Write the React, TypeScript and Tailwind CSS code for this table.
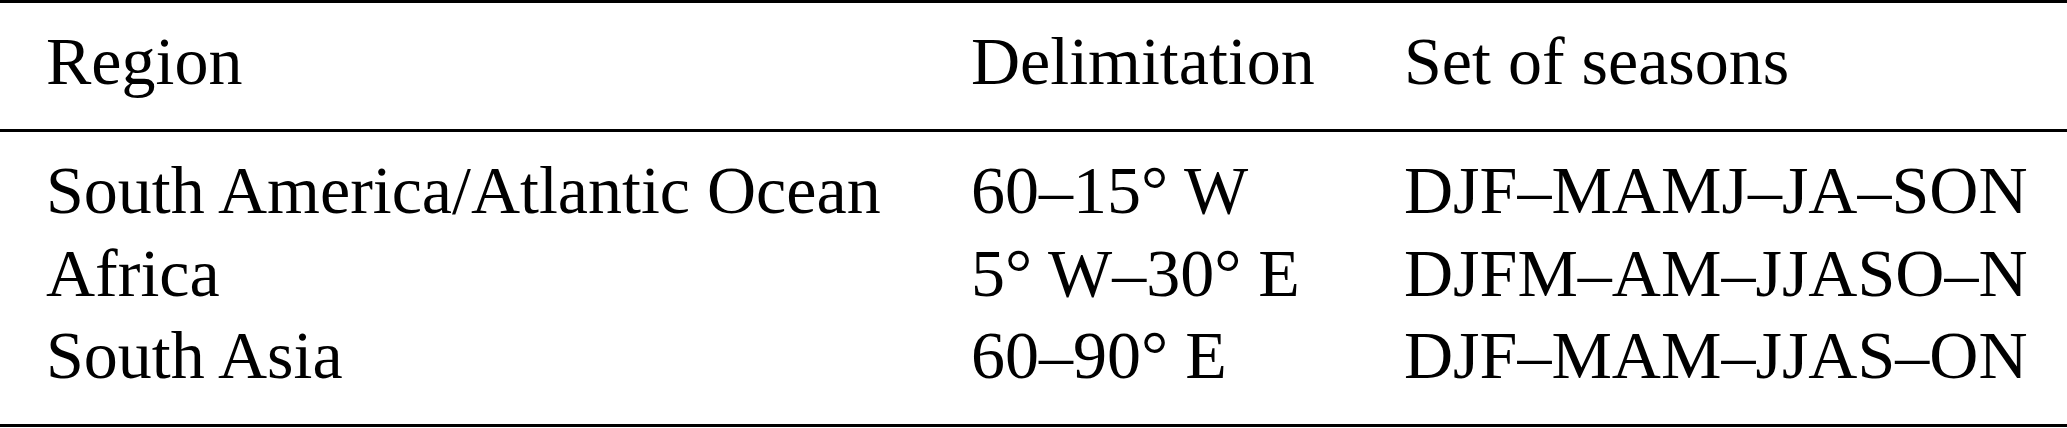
const rows = [
  { region: "South America/Atlantic Ocean", delim: "60–15° W", seasons: "DJF–MAMJ–JA–SON" },
  { region: "Africa", delim: "5° W–30° E", seasons: "DJFM–AM–JJASO–N" },
  { region: "South Asia", delim: "60–90° E", seasons: "DJF–MAM–JJAS–ON" },
]

const App = () => {
  return (
    <div className="w-[2067px] h-[428px] bg-white text-black font-['Liberation_Serif','Times_New_Roman',serif] text-[68px] leading-[82.5px]">
      {/* top rule */}
      <div className="h-[3px] bg-black" />
      <div className="grid grid-cols-[925px_433px_1fr] pl-[46px] pt-[17px] pb-[26.5px]">
        <div>Region</div>
        <div>Delimitation</div>
        <div>Set of seasons</div>
      </div>
      {/* mid rule */}
      <div className="h-[3px] bg-black" />
      <div className="grid grid-cols-[925px_433px_1fr] pl-[46px] pt-[17px] pb-[27px]">
        {rows.map((r) => (
          <div key={r.region} className="contents">
            <div>{r.region}</div>
            <div>{r.delim}</div>
            <div>{r.seasons}</div>
          </div>
        ))}
      </div>
      {/* bottom rule */}
      <div className="h-[3px] bg-black" />
    </div>
  )
}

export default App
